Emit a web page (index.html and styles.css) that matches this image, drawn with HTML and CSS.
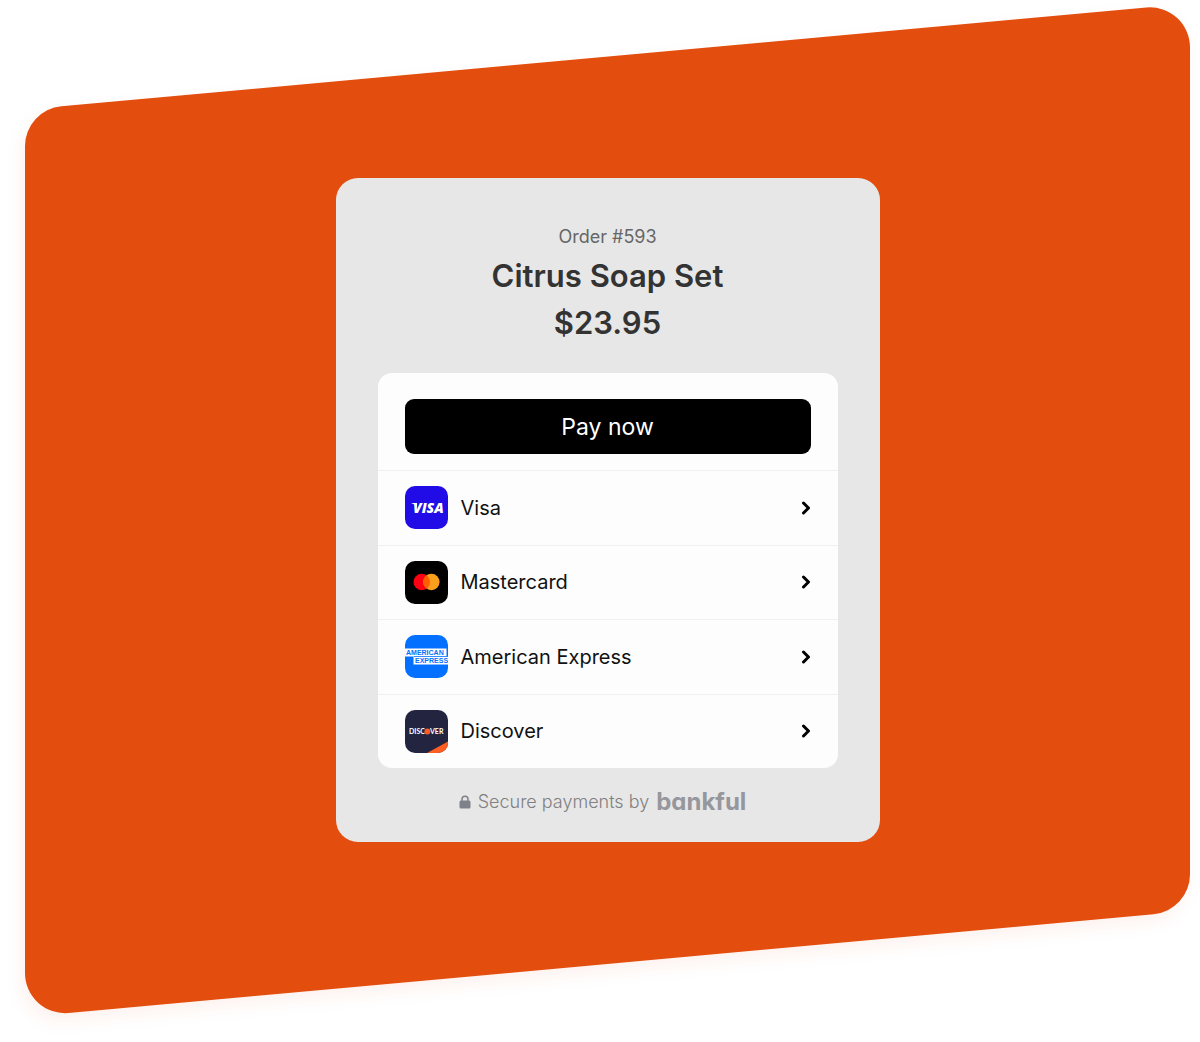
FILE: index.html
```html
<!DOCTYPE html>
<html lang="en">
<head>
<meta charset="utf-8">
<meta name="viewport" content="width=device-width, initial-scale=1">
<title>Checkout – Citrus Soap Set</title>
<link rel="stylesheet" href="styles.css">
</head>
<body>
<main class="stage">
  <svg class="backdrop" viewBox="0 0 1165 1014" preserveAspectRatio="none" aria-hidden="true">
    <path d="M0 143.2A40 40 0 0 1 36.4 103.3L1121.4 4.5A40 40 0 0 1 1165 44.3V871.4A40 40 0 0 1 1128.6 911.2L43.6 1010A40 40 0 0 1 0 970.2Z"/>
  </svg>

  <section class="card">
    <header class="order">
      <p class="order-number">Order #593</p>
      <h1 class="order-title">Citrus Soap Set</h1>
      <p class="order-title">$23.95</p>
    </header>

    <div class="methods">
      <div class="pay">
        <button class="pay-button" type="button">Pay now</button>
      </div>
      <ul class="list">
        <li class="item">
          <a class="method" href="#visa">
            <svg class="brand" viewBox="0 0 43 43" aria-hidden="true">
              <rect width="43" height="43" rx="10" fill="#210be6"/>
              <path d="M6 17h6l0 4q-2-3-6-4z" fill="#fff"/>
              <text x="8" y="27" class="visa-text">VISA</text>
            </svg>
            <span class="name">Visa</span>
            <svg class="chevron" viewBox="0 0 10 14" aria-hidden="true"><path d="M2.500 2l5 5-5 5"/></svg>
          </a>
        </li>
        <li class="item">
          <a class="method" href="#mastercard">
            <svg class="brand" viewBox="0 0 43 43" aria-hidden="true">
              <rect width="43" height="43" rx="10" fill="#000"/>
              <circle cx="16.700" cy="21" r="8.2" fill="#ff0013"/>
              <circle cx="26.4" cy="21" r="8.2" fill="#f99f1b"/>
              <path d="M21.55 14.4a8.2 8.2 0 0 1 0 13.2a8.2 8.2 0 0 1 0-13.2z" fill="#ff5f00"/>
            </svg>
            <span class="name">Mastercard</span>
            <svg class="chevron" viewBox="0 0 10 14" aria-hidden="true"><path d="M2.500 2l5 5-5 5"/></svg>
          </a>
        </li>
        <li class="item">
          <a class="method" href="#amex">
            <svg class="brand" viewBox="0 0 43 43" aria-hidden="true">
              <rect width="43" height="43" rx="10" fill="#0470ff"/>
              <path d="M0 13.500h41.500v8H43v8H8.500v-8H0z" fill="#fff"/>
              <path d="M9 21.500h34" stroke="#0470ff" stroke-width="0.800"/>
              <text x="1" y="20" class="amex-text">AMERICAN</text>
              <text x="10" y="28" class="amex-text">EXPRESS</text>
            </svg>
            <span class="name">American Express</span>
            <svg class="chevron" viewBox="0 0 10 14" aria-hidden="true"><path d="M2.500 2l5 5-5 5"/></svg>
          </a>
        </li>
        <li class="item">
          <a class="method" href="#discover">
            <svg class="brand" viewBox="0 0 43 43" aria-hidden="true">
              <rect width="43" height="43" rx="10" fill="#232440"/>
              <path d="M43 31.500V33a10 10 0 0 1-10 10H22z" fill="#ff5e22"/>
              <text x="4" y="24" class="discover-text">DISC</text>
              <circle cx="22.400" cy="21.500" r="2.900" fill="#ff5e22"/>
              <text x="25" y="24" class="discover-text">VER</text>
            </svg>
            <span class="name">Discover</span>
            <svg class="chevron" viewBox="0 0 10 14" aria-hidden="true"><path d="M2.500 2l5 5-5 5"/></svg>
          </a>
        </li>
      </ul>
    </div>

    <footer class="secure">
      <svg class="lock" viewBox="0 0 12 14" aria-hidden="true">
        <path d="M3 6V4.200a3 3 0 0 1 6 0V6" fill="none" stroke="#7f8189" stroke-width="1.500"/>
        <rect x="0.500" y="5.500" width="11" height="8" rx="1.500" fill="#7f8189"/>
      </svg>
      <span>Secure payments by</span>
      <strong class="bankful">bankful</strong>
    </footer>
  </section>
</main>
</body>
</html>
```

FILE: styles.css
```css
* {
  box-sizing: border-box;
}

body {
  margin: 0;
  background: #fff;
  font-family: Inter, "Liberation Sans", sans-serif;
}

h1, p, ul {
  margin: 0;
  padding: 0;
}

/* The backdrop and the card share the single grid cell */
.stage {
  display: grid;
  grid-template: minmax(0, 1fr) / minmax(0, 1fr);
  place-items: center;
  min-height: 100vh;
  padding: 3px 10px 25px 25px;
  overflow: hidden;
}

.backdrop {
  grid-area: 1 / 1;
  width: 100%;
  height: 100%;
  min-height: 0;
  contain: size;
  overflow: visible;
  fill: #e34d0e;
  filter: drop-shadow(-4px 8px 8px rgba(227, 77, 14, 0.07));
}

.card {
  grid-area: 1 / 1;
  z-index: 1;
  width: 100%;
  max-width: 544px;
  padding: 44px 42px 24px;
  border-radius: 22px;
  background: #e7e7e7;
}

.order {
  text-align: center;
  color: #333;
}

.order-number {
  font-size: 18px;
  line-height: 30px;
  color: #666;
}

.order-title {
  font-size: 31px;
  font-weight: 600;
  line-height: 47px;
}

.methods {
  margin-top: 27px;
  border-radius: 14px;
  background: #fdfdfd;
}

.pay {
  padding: 26px 27px 16px;
}

.pay-button {
  display: block;
  width: 100%;
  height: 55px;
  border: 0;
  border-radius: 9px;
  background: #000;
  color: #fff;
  font: inherit;
  font-size: 23px;
}

.list {
  display: grid;
  grid-auto-rows: 1fr;
  min-height: 298px;
  list-style: none;
}

.item {
  display: grid;
  border-top: 1px solid #f1f1f1;
}

.method {
  display: flex;
  align-items: center;
  gap: 13px;
  padding: 0 27px;
  color: #111;
  text-decoration: none;
}

.brand {
  flex: none;
  width: 43px;
  height: 43px;
}

.name {
  flex: 1;
  font-size: 20px;
}

.chevron {
  width: 10px;
  height: 14px;
  fill: none;
  stroke: #000;
  stroke-width: 3;
  stroke-linecap: round;
  stroke-linejoin: round;
}

.visa-text {
  font: italic 800 14px "Open Sans", sans-serif;
  fill: #fff;
}

.amex-text {
  font: 700 7px "Liberation Sans", sans-serif;
  fill: #0470ff;
}

.discover-text {
  font: 700 7px Lato, sans-serif;
  fill: #fff;
}

.secure {
  display: flex;
  align-items: center;
  justify-content: center;
  gap: 7px;
  margin-top: 18px;
  padding-right: 10px;
  font-size: 18px;
  font-weight: 300;
  line-height: 32px;
  color: #808080;
}

.lock {
  width: 12px;
  height: 14px;
}

.bankful {
  font-size: 24px;
  font-weight: 700;
  font-feature-settings: "cv11";
  color: #96979d;
}
```
